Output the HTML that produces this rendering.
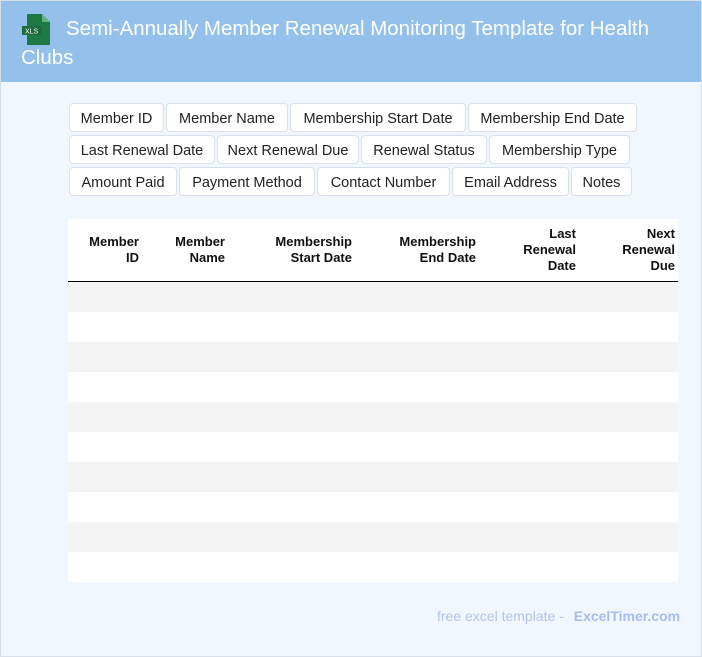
<!DOCTYPE html>
<html><head><style>
*{box-sizing:border-box;margin:0;padding:0}
body{width:702px;height:657px;overflow:hidden;background:#f0f7ff;font-family:"Liberation Sans",Arial,sans-serif;position:relative}
.frame{position:absolute;left:0;top:0;width:702px;height:657px;border:1px solid #d5dfe8;pointer-events:none}
.hdr{position:absolute;left:0;top:0;width:702px;height:82px;background:#93c1ec}
.title{position:absolute;left:21px;top:14px;width:660px;color:#fff;font-size:20.5px;line-height:29px;text-indent:45px}
.ico{position:absolute;left:22px;top:14px}
.tag{position:absolute;height:29px;background:#fff;border:1px solid #d8e2ec;border-radius:4px;font-size:14.5px;line-height:27px;padding-top:2px;text-align:center;color:#222;white-space:nowrap}
.tbl{position:absolute;left:68px;top:219px;width:610px}
.th{height:63px;background:#fff;border-bottom:1.5px solid #000;position:relative}
.th div{position:absolute;font-weight:bold;font-size:13px;line-height:16px;text-align:right;color:#111}
.r{height:30px}
.foot{position:absolute;left:437px;top:608px;font-size:14px;color:#b4c3ee}
.foot b{color:#a9bcee;margin-left:6px}
</style></head><body>
<div class="hdr"></div>
<svg class="ico" width="30" height="31" viewBox="0 0 30 31"><path d="M5 0h15l8 8v23H5z" fill="#1e7a45"/><path d="M20 0v8h8z" fill="#5fb383"/><rect x="0" y="12" width="20" height="9" fill="#1e6b3e"/><text x="3" y="19.5" font-size="7" fill="#fff" font-family="Liberation Sans">XLS</text></svg>
<div class="title">Semi-Annually Member Renewal Monitoring Template for Health Clubs</div>
<div class="tag" style="left:69px;top:103px;width:95px">Member ID</div>
<div class="tag" style="left:166px;top:103px;width:122px">Member Name</div>
<div class="tag" style="left:290px;top:103px;width:176px">Membership Start Date</div>
<div class="tag" style="left:468px;top:103px;width:169px">Membership End Date</div>
<div class="tag" style="left:69px;top:135px;width:146px">Last Renewal Date</div>
<div class="tag" style="left:217px;top:135px;width:142px">Next Renewal Due</div>
<div class="tag" style="left:361px;top:135px;width:126px">Renewal Status</div>
<div class="tag" style="left:489px;top:135px;width:141px">Membership Type</div>
<div class="tag" style="left:69px;top:167px;width:108px">Amount Paid</div>
<div class="tag" style="left:179px;top:167px;width:136px">Payment Method</div>
<div class="tag" style="left:317px;top:167px;width:133px">Contact Number</div>
<div class="tag" style="left:452px;top:167px;width:117px">Email Address</div>
<div class="tag" style="left:571px;top:167px;width:61px">Notes</div>
<div class="tbl">
<div class="th">
<div style="right:539px;top:15px">Member<br>ID</div>
<div style="right:453px;top:15px">Member<br>Name</div>
<div style="right:326px;top:15px">Membership<br>Start Date</div>
<div style="right:202px;top:15px">Membership<br>End Date</div>
<div style="right:102px;top:7px">Last<br>Renewal<br>Date</div>
<div style="right:3px;top:7px">Next<br>Renewal<br>Due</div>
</div>
<div class="r" style="background:#f4f4f4"></div><div class="r" style="background:#fff"></div>
<div class="r" style="background:#f4f4f4"></div><div class="r" style="background:#fff"></div>
<div class="r" style="background:#f4f4f4"></div><div class="r" style="background:#fff"></div>
<div class="r" style="background:#f4f4f4"></div><div class="r" style="background:#fff"></div>
<div class="r" style="background:#f4f4f4"></div><div class="r" style="background:#fff"></div>
</div>
<div class="foot">free excel template - <b>ExcelTimer.com</b></div>
<div class="frame"></div>
</body></html>
